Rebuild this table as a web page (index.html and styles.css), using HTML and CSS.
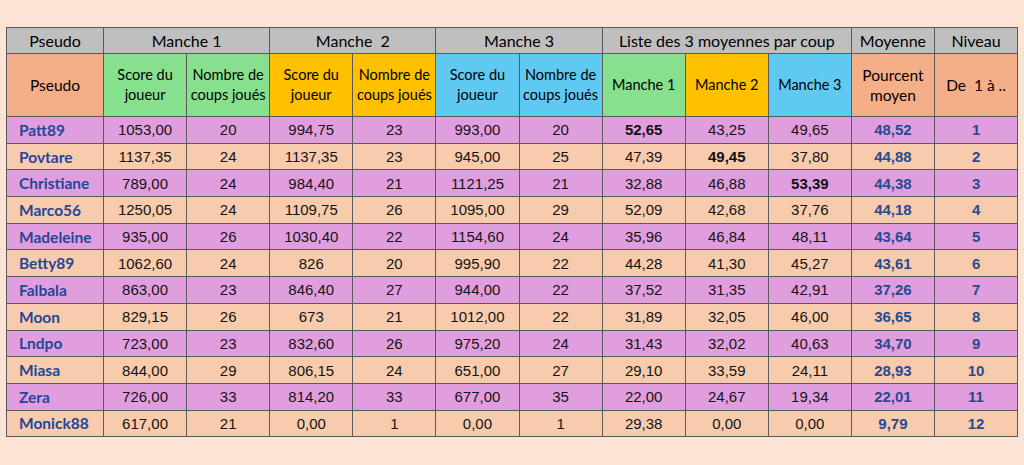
FILE: index.html
```html
<!DOCTYPE html>
<html lang="fr">
<head>
<meta charset="utf-8">
<title>Classement</title>
<link rel="stylesheet" href="styles.css">
</head>
<body>
<table class="grid">
  <colgroup>
    <col class="c-name">
    <col span="11" class="c-std">
  </colgroup>
  <thead>
    <tr class="h1">
      <th>Pseudo</th>
      <th colspan="2">Manche 1</th>
      <th colspan="2">Manche &nbsp;2</th>
      <th colspan="2">Manche 3</th>
      <th colspan="3">Liste des 3 moyennes par coup</th>
      <th>Moyenne</th>
      <th>Niveau</th>
    </tr>
    <tr class="h2">
      <th class="salmon big">Pseudo</th>
      <th class="green">Score du joueur</th>
      <th class="green">Nombre de coups joués</th>
      <th class="yellow">Score du joueur</th>
      <th class="yellow">Nombre de coups joués</th>
      <th class="blue">Score du joueur</th>
      <th class="blue">Nombre de coups joués</th>
      <th class="green">Manche 1</th>
      <th class="yellow">Manche 2</th>
      <th class="blue">Manche 3</th>
      <th class="salmon big">Pourcent moyen</th>
      <th class="salmon big">De &nbsp;1 à ..</th>
    </tr>
  </thead>
  <tbody>
    <tr class="pink"><td class="name">Patt89</td><td>1053,00</td><td>20</td><td>994,75</td><td>23</td><td>993,00</td><td>20</td><td class="b">52,65</td><td>43,25</td><td>49,65</td><td class="res">48,52</td><td class="res">1</td></tr>
    <tr class="peach"><td class="name">Povtare</td><td>1137,35</td><td>24</td><td>1137,35</td><td>23</td><td>945,00</td><td>25</td><td>47,39</td><td class="b">49,45</td><td>37,80</td><td class="res">44,88</td><td class="res">2</td></tr>
    <tr class="pink"><td class="name">Christiane</td><td>789,00</td><td>24</td><td>984,40</td><td>21</td><td>1121,25</td><td>21</td><td>32,88</td><td>46,88</td><td class="b">53,39</td><td class="res">44,38</td><td class="res">3</td></tr>
    <tr class="peach"><td class="name">Marco56</td><td>1250,05</td><td>24</td><td>1109,75</td><td>26</td><td>1095,00</td><td>29</td><td>52,09</td><td>42,68</td><td>37,76</td><td class="res">44,18</td><td class="res">4</td></tr>
    <tr class="pink"><td class="name">Madeleine</td><td>935,00</td><td>26</td><td>1030,40</td><td>22</td><td>1154,60</td><td>24</td><td>35,96</td><td>46,84</td><td>48,11</td><td class="res">43,64</td><td class="res">5</td></tr>
    <tr class="peach"><td class="name">Betty89</td><td>1062,60</td><td>24</td><td>826</td><td>20</td><td>995,90</td><td>22</td><td>44,28</td><td>41,30</td><td>45,27</td><td class="res">43,61</td><td class="res">6</td></tr>
    <tr class="pink"><td class="name">Falbala</td><td>863,00</td><td>23</td><td>846,40</td><td>27</td><td>944,00</td><td>22</td><td>37,52</td><td>31,35</td><td>42,91</td><td class="res">37,26</td><td class="res">7</td></tr>
    <tr class="peach"><td class="name">Moon</td><td>829,15</td><td>26</td><td>673</td><td>21</td><td>1012,00</td><td>22</td><td>31,89</td><td>32,05</td><td>46,00</td><td class="res">36,65</td><td class="res">8</td></tr>
    <tr class="pink"><td class="name">Lndpo</td><td>723,00</td><td>23</td><td>832,60</td><td>26</td><td>975,20</td><td>24</td><td>31,43</td><td>32,02</td><td>40,63</td><td class="res">34,70</td><td class="res">9</td></tr>
    <tr class="peach"><td class="name">Miasa</td><td>844,00</td><td>29</td><td>806,15</td><td>24</td><td>651,00</td><td>27</td><td>29,10</td><td>33,59</td><td>24,11</td><td class="res">28,93</td><td class="res">10</td></tr>
    <tr class="pink"><td class="name">Zera</td><td>726,00</td><td>33</td><td>814,20</td><td>33</td><td>677,00</td><td>35</td><td>22,00</td><td>24,67</td><td>19,34</td><td class="res">22,01</td><td class="res">11</td></tr>
    <tr class="peach"><td class="name">Monick88</td><td>617,00</td><td>21</td><td>0,00</td><td>1</td><td>0,00</td><td>1</td><td>29,38</td><td>0,00</td><td>0,00</td><td class="res">9,79</td><td class="res">12</td></tr>
  </tbody>
</table>
</body>
</html>
```

FILE: styles.css
```css
html, body {
  margin: 0;
  padding: 0;
  background: #fbe4d6;
}

body {
  padding: 27px 0 0 6px;
  font-family: "Liberation Sans", Arial, sans-serif;
}

.grid {
  border-collapse: collapse;
  table-layout: fixed;
  width: 1011px;
  border: 1px solid #505050;
}

.c-name { width: 97px; }
.c-std { width: 83.1px; }

.grid th,
.grid td {
  border: 1px solid #5a5a5a;
  padding: 0;
  text-align: center;
  vertical-align: middle;
}

.grid th {
  font-family: "Lato", "Noto Sans", sans-serif;
  font-weight: normal;
  color: #000;
  font-size: 14.5px;
  line-height: 20px;
}

.h1 th {
  background: #bfbfbf;
  height: 25px;
  font-size: 16px;
}

.h2 th {
  height: 62px;
}

.h2 th.big {
  font-size: 15.5px;
}

.salmon { background: #f4ae88; }
.green { background: #86e08d; }
.yellow { background: #ffc000; }
.blue { background: #60c9f1; }

.grid td {
  height: 25.7px;
  font-size: 15px;
  color: #141414;
}

.pink td { background: #e19edf; }
.peach td { background: #f8cbad; }

.grid td.name {
  text-align: left;
  padding-left: 12px;
  font-family: "Lato", "Open Sans", sans-serif;
  font-weight: bold;
  font-size: 15.5px;
  color: #22479a;
}

.grid td.b {
  font-weight: bold;
  color: #111;
}

.grid td.res {
  font-weight: bold;
  color: #274a92;
}
```
